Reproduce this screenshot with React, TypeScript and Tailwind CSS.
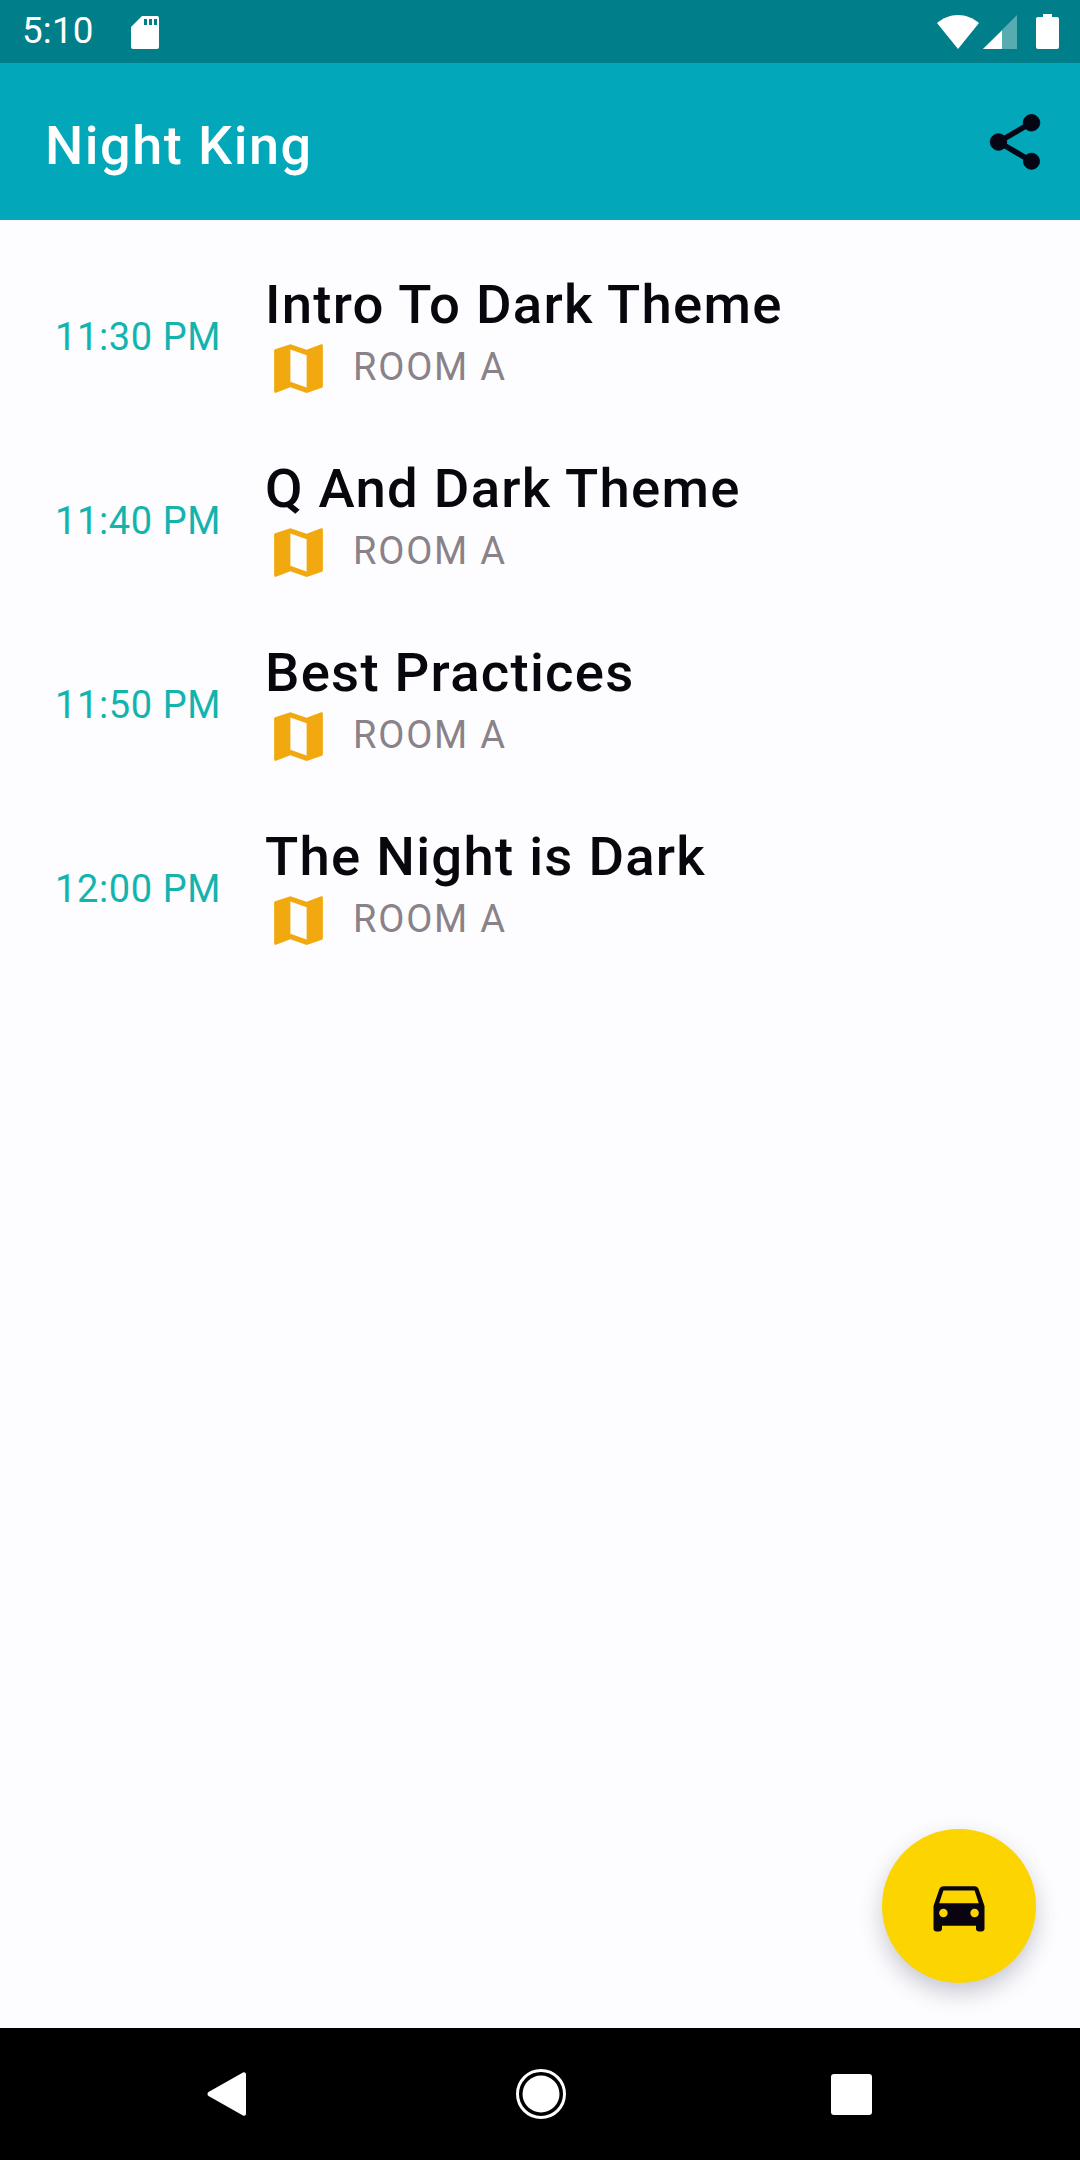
const sessions = [
  { time: "11:30 PM", title: "Intro To Dark Theme" },
  { time: "11:40 PM", title: "Q And Dark Theme" },
  { time: "11:50 PM", title: "Best Practices" },
  { time: "12:00 PM", title: "The Night is Dark" },
];

function StatusBar() {
  return (
    <div className="flex h-[63px] items-center bg-[#007e89] text-white">
      <span className="ml-[22px] text-[36.75px] leading-none tracking-[0.2px]">5:10</span>
      <svg className="ml-[36px] h-[34px] w-[30px]" viewBox="0 0 30 34" fill="white">
        <path d="M12 1h15a2 2 0 0 1 2 2v29a2 2 0 0 1-2 2H3a2 2 0 0 1-2-2V12z" />
        <path d="M14 4h3v6h-3zM19 4h3v6h-3zM24 4h3v6h-3z" fill="#007e89" />
      </svg>
      <svg className="ml-auto h-[34px] w-[42px]" viewBox="0 0 42 34" fill="white">
        <path d="M21 0C13 0 6 3 0 8l21 26L42 8C36 3 29 0 21 0z" />
      </svg>
      <svg className="ml-[3px] h-[34px] w-[36px]" viewBox="0 0 36 34">
        <path d="M35 0v34H1z" fill="white" fillOpacity="0.35" />
        <path d="M20 15.500v18.500H1z" fill="white" />
      </svg>
      <svg className="mr-[21px] ml-[18px] h-[35px] w-[23px]" viewBox="0 0 23 35" fill="white">
        <path d="M7 0h9v3h5a2 2 0 0 1 2 2v28a2 2 0 0 1-2 2H2a2 2 0 0 1-2-2V5a2 2 0 0 1 2-2h5z" />
      </svg>
    </div>
  );
}

function AppBar() {
  return (
    <header className="flex h-[157px] items-center justify-between bg-[#02a7b9] pr-[32px] pl-[45px]">
      <h1 className="pt-[8px] text-[54px] leading-none font-medium tracking-[1.5px] text-white">Night King</h1>
      <svg className="h-[66px] w-[66px]" viewBox="0 0 24 24" fill="#050514" stroke="#050514" strokeWidth="0.3">
        <path d="M18 16.080c-.76 0-1.440.3-1.960.77L8.910 12.700c.05-.23.09-.46.09-.7s-.04-.47-.09-.7l7.050-4.110c.54.5 1.250.81 2.040.81 1.660 0 3-1.340 3-3s-1.340-3-3-3-3 1.340-3 3c0 .24.04.47.09.7L8.040 9.810C7.500 9.310 6.790 9 6 9c-1.660 0-3 1.340-3 3s1.340 3 3 3c.79 0 1.500-.31 2.040-.81l7.120 4.160c-.05.21-.08.43-.08.65 0 1.610 1.310 2.920 2.920 2.920 1.610 0 2.920-1.310 2.920-2.920s-1.310-2.920-2.920-2.920z" />
      </svg>
    </header>
  );
}

function SessionRow({ time, title }: { time: string; title: string }) {
  return (
    <article className="flex h-[184px] items-center">
      <span className="w-[265px] pt-[2px] pl-[55px] text-[38px] leading-none tracking-[0.6px] whitespace-nowrap text-[#14b4ae]">{time}</span>
      <div>
        <h2 className="text-[54.5px] leading-[62px] font-medium tracking-[1.25px] text-[#07070d]">{title}</h2>
        <div className="flex h-[65px] items-center">
          <svg className="mt-[2px] ml-[1px] h-[65px] w-[65px] shrink-0" viewBox="0 0 24 24" fill="#f2a90f">
            <path d="M20.500 3l-.16.03L15 5.100 9 3 3.360 4.900c-.21.07-.36.25-.36.48V20.500c0 .28.22.5.5.5l.16-.03L9 18.900l6 2.100 5.640-1.900c.21-.07.36-.25.36-.48V3.500c0-.28-.22-.5-.5-.5zM15 19l-6-2.110V5l6 2.110V19z" />
          </svg>
          <span className="ml-[22px] text-[38px] leading-none tracking-[1.8px] text-[#8a8289]">ROOM A</span>
        </div>
      </div>
    </article>
  );
}

function NavBar() {
  return (
    <nav className="flex h-[132px] items-center bg-black pl-[207px]">
      <svg className="h-[44px] w-[39px]" viewBox="0 0 39 44" fill="white">
        <path d="M36 .500a2 2 0 0 1 3 1.500v40a2 2 0 0 1-3 1.500L1.500 24a2.500 2.500 0 0 1 0-4z" />
      </svg>
      <svg className="ml-[270px] h-[50px] w-[50px]" viewBox="0 0 50 50">
        <circle cx="25" cy="25" r="23.500" fill="none" stroke="white" strokeWidth="3" />
        <circle cx="25" cy="25" r="18.500" fill="white" />
      </svg>
      <div className="ml-[265px] h-[41px] w-[41px] rounded-[3px] bg-white" />
    </nav>
  );
}

export default function App() {
  return (
    <div className="flex h-[2160px] w-[1080px] flex-col bg-[#fdfdff] font-['Roboto',sans-serif]">
      <StatusBar />
      <AppBar />
      <main className="relative flex-1 pt-[24px]">
        {sessions.map((s) => (
          <SessionRow key={s.time} time={s.time} title={s.title} />
        ))}
        <button className="absolute right-[44px] bottom-[45px] flex h-[154px] w-[154px] items-center justify-center rounded-full bg-[#fcd400] shadow-[0_10px_22px_rgba(60,60,90,0.28)]">
          <svg className="h-[68px] w-[68px]" viewBox="0 0 24 24" fill="#0a0410">
            <path d="M18.920 6.010C18.720 5.420 18.160 5 17.500 5h-11c-.66 0-1.210.42-1.420 1.010L3 12v8c0 .55.45 1 1 1h1c.55 0 1-.45 1-1v-1h12v1c0 .55.45 1 1 1h1c.55 0 1-.45 1-1v-8l-2.080-5.990zM6.500 16c-.83 0-1.500-.67-1.500-1.500S5.670 13 6.500 13s1.500.67 1.500 1.500S7.330 16 6.500 16zm11 0c-.83 0-1.500-.67-1.500-1.500s.67-1.500 1.500-1.500 1.500.67 1.500 1.500-.67 1.500-1.500 1.500zM5 11l1.500-4.500h11L19 11H5z" />
          </svg>
        </button>
      </main>
      <NavBar />
    </div>
  );
}
